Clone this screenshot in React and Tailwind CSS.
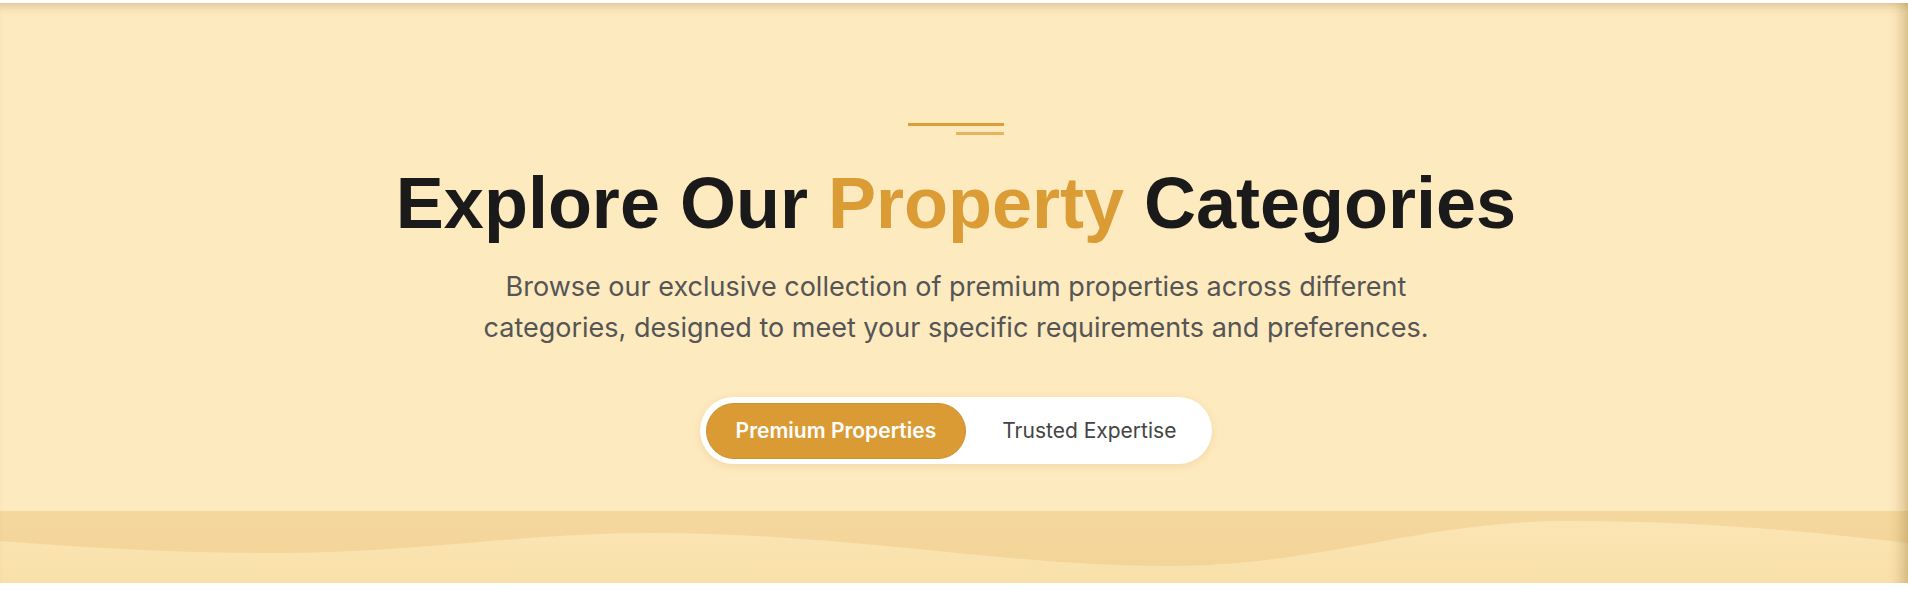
import React from "react";

export default function App() {
  return (
    <div className="w-[1908px] h-[591px] bg-white pt-[3px] overflow-hidden">
      <section className="relative w-full h-[580px] pl-[4px] bg-[#FEEABF] flex flex-col items-center overflow-hidden">
        <div className="pointer-events-none absolute inset-0 z-10 shadow-[inset_0_9px_10px_-6px_rgba(140,105,40,0.3),inset_-18px_0_14px_-12px_rgba(140,105,40,0.35)]" />
        <div className="flex flex-col items-end gap-[6px] pt-[120px]">
          <div className="w-[96px] h-[3px] bg-[#DC9C36]" />
          <div className="w-[48px] h-[3px] bg-[#E6B45C]" />
        </div>
        <h2
          className="mt-[32px] text-[72px] leading-none font-bold text-[#1A1A1A] whitespace-nowrap"
          style={{ fontFamily: '"Liberation Sans", Arial, sans-serif' }}
        >
          Explore Our <span className="text-[#DB9B35]">Property</span> Categories
        </h2>
        <p
          className="mt-[27px] max-w-[980px] text-center text-[27px] leading-[41px] text-[#555555]"
          style={{ fontFamily: 'Inter, "Noto Sans", sans-serif' }}
        >
          Browse our exclusive collection of premium properties across different categories, designed to meet your specific requirements and preferences.
        </p>
        <div
          className="mt-[49px] flex items-center gap-[6px] p-[5.5px] bg-white rounded-full shadow-[0_2px_8px_rgba(180,140,60,0.18)]"
          style={{ fontFamily: 'Inter, "Noto Sans", sans-serif' }}
        >
          <button className="h-[56px] px-[29px] rounded-full bg-[#DA9B34] border border-[#CF9230] text-white text-[21px] font-semibold">
            Premium Properties
          </button>
          <button className="h-[56px] px-[30px] rounded-full text-[#444444] text-[21px] font-normal">
            Trusted Expertise
          </button>
        </div>
        <div className="mt-auto -ml-[4px] w-[1908px] h-[72px] bg-gradient-to-b from-[#F5D89E] to-[#F2D397]">
          <svg className="block w-full h-full" viewBox="0 0 1908 72" preserveAspectRatio="none">
            <defs>
              <linearGradient id="lw" x1="0" y1="0" x2="0" y2="1">
                <stop offset="0" stopColor="#FBE5B3" />
                <stop offset="1" stopColor="#F9E0AA" />
              </linearGradient>
            </defs>
            <path
              d="M0,30 C80,36 170,42 270,42 C420,42 520,22 650,22 C850,22 1000,55 1170,55 C1320,55 1420,10 1570,10 C1710,10 1820,22 1908,32 L1908,72 L0,72 Z"
              fill="url(#lw)"
            />
          </svg>
        </div>
      </section>
    </div>
  );
}
